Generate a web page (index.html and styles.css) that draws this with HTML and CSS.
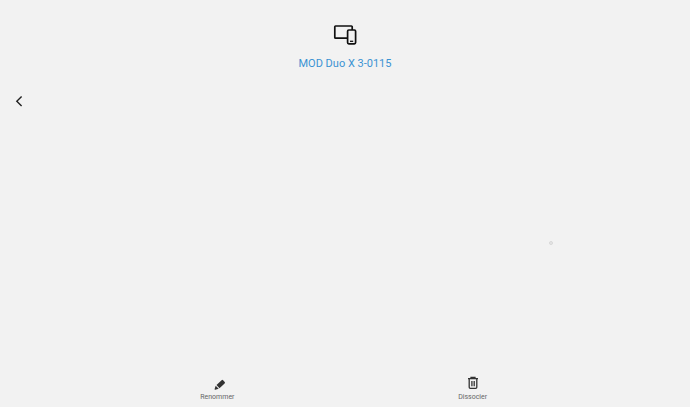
FILE: index.html
```html
<!DOCTYPE html>
<html lang="fr">
<head>
<meta charset="utf-8">
<meta name="viewport" content="width=device-width, initial-scale=1">
<title>MOD Duo X 3-0115</title>
<link rel="stylesheet" href="styles.css">
</head>
<body>
<header class="device">
  <svg class="device-icon" width="24" height="20" viewBox="0 0 24 20" fill="none" stroke="#111" stroke-width="1.7" aria-hidden="true">
    <path d="M14 13.2H2.6a.8.8 0 0 1-.8-.8V1.8a.8.8 0 0 1 .8-.8h15.8a.8.8 0 0 1 .8.8V5"/>
    <rect x="14.6" y="5" width="8" height="13.8" rx="1.2"/>
    <path d="M17 16.3h3.2" stroke-width="1.3"/>
  </svg>
  <h1 class="device-name">MOD Duo X 3-0115</h1>
</header>
<nav class="toolbar">
  <button class="back" type="button" aria-label="Retour">
    <svg width="10" height="12" viewBox="0 0 10 12" fill="none" stroke="#222" stroke-width="1.4" aria-hidden="true"><path d="M7.6 1.4 2.8 6.2l4.8 4.8"/></svg>
  </button>
</nav>
<main class="content"><span class="touch-dot"></span></main>
<footer class="actions">
  <button class="action" type="button">
    <svg class="pencil" width="16" height="14" viewBox="0 0 16 14" fill="#333" aria-hidden="true">
      <path d="m4.5 9 5.1-4.8q.8-.7 1.5 0l1.6 1.7q.7.8-.1 1.5L7.5 12.2zM3.7 9.8l3 3-3.5.9q-.8.1-.6-.7z"/>
    </svg>
    <span>Renommer</span>
  </button>
  <button class="action" type="button">
    <svg width="16" height="14" viewBox="0 0 16 14" fill="none" stroke="#333" stroke-width="1.3" aria-hidden="true">
      <path d="M3 2.7h10M6 2.4V1.3h4v1.1M4.2 3v8.2q0 1.1 1.1 1.1h5.4q1.1 0 1.1-1.1V3M6.9 5v5.2M9.2 5v5.2"/>
    </svg>
    <span>Dissocier</span>
  </button>
</footer>
</body>
</html>
```
FILE: styles.css
```css
* {
  box-sizing: border-box;
}

body {
  margin: 0;
  min-height: 100vh;
  display: flex;
  flex-direction: column;
  background: #f2f2f2;
  color: #666;
  font-family: Roboto, "Liberation Sans", sans-serif;
}

button {
  padding: 0;
  border: 0;
  background: none;
  color: inherit;
  font: inherit;
  cursor: pointer;
}

svg {
  display: block;
}

.device {
  display: flex;
  flex-direction: column;
  align-items: center;
  gap: 12px;
  padding-top: 25px;
}

.device-name {
  margin: 0;
  color: #3b93d3;
  font-size: 11px;
  font-weight: 400;
  line-height: 14px;
}

.toolbar {
  display: flex;
  padding: 20px 8px 0;
}

.back {
  display: grid;
  place-items: center;
  width: 22px;
  height: 20px;
}

.content {
  position: relative;
  flex: 1;
}

.touch-dot {
  position: absolute;
  top: 49%;
  left: 79.6%;
  width: 4px;
  height: 4px;
  border: 1px solid #d8d8d8;
  border-radius: 50%;
  background: #e6e6e6;
}

.actions {
  display: grid;
  grid-template-columns: 1fr 1fr;
  width: 74%;
  margin: 0 auto;
  padding-bottom: 5px;
}

.action {
  display: flex;
  flex-direction: column;
  align-items: center;
  justify-content: flex-end;
  gap: 2px;
  font-size: 7px;
  line-height: 10px;
}

.pencil {
  margin-left: 5px;
}
```
